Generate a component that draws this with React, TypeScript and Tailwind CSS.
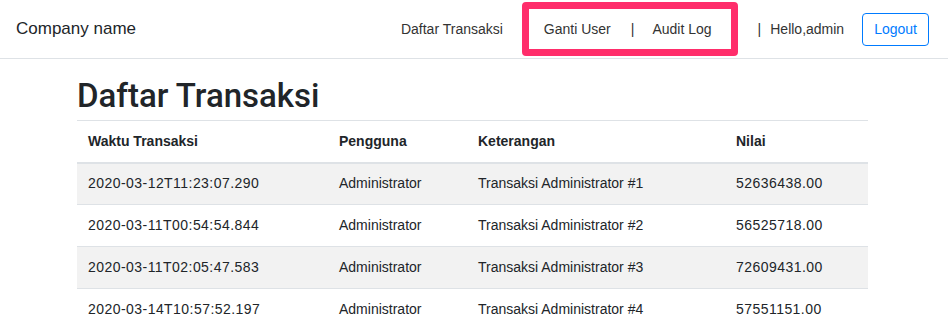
import React from "react";

const rows = [
  ["2020-03-12T11:23:07.290", "Administrator", "Transaksi Administrator #1", "52636438.00"],
  ["2020-03-11T00:54:54.844", "Administrator", "Transaksi Administrator #2", "56525718.00"],
  ["2020-03-11T02:05:47.583", "Administrator", "Transaksi Administrator #3", "72609431.00"],
  ["2020-03-14T10:57:52.197", "Administrator", "Transaksi Administrator #4", "57551151.00"],
];

export default function App() {
  return (
    <div
      className="w-[948px] h-[328px] overflow-hidden bg-white text-[#212529]"
      style={{ fontFamily: '"Liberation Sans", Arial, sans-serif' }}
    >
      <nav className="flex items-center h-[59px] border-b border-[#dee2e6] pl-4 pr-[19px]">
        <div className="text-[17px] text-[#212529]">Company name</div>
        <div className="ml-auto flex items-center text-[14px] text-[#333]">
          <span>Daftar Transaksi</span>
          <div className="ml-[19px] flex items-center h-[54px] border-[7px] border-[#ff2d6b] rounded-[4px] pl-[15px] pr-[19px]">
            <span>Ganti User</span>
            <span className="ml-[20px]">|</span>
            <span className="ml-[18px]">Audit Log</span>
          </div>
          <span className="ml-[20px]">|</span>
          <span className="ml-[9px]">Hello,admin</span>
          <button className="ml-[18px] h-[33px] px-[11px] border border-[#007bff] text-[#007bff] rounded-[4px] text-[14px]">
            Logout
          </button>
        </div>
      </nav>
      <main className="pl-[77px] pr-[80px]">
        <h2
          className="text-[33px] font-medium leading-none pt-[20px] pb-[8px] text-[#212529]"
          style={{ fontFamily: "Roboto, 'Liberation Sans', sans-serif" }}
        >
          Daftar Transaksi
        </h2>
        <table className="w-[791px] table-fixed border-collapse text-[14px]">
          <colgroup>
            <col className="w-[251px]" />
            <col className="w-[139px]" />
            <col className="w-[258px]" />
            <col className="w-[143px]" />
          </colgroup>
          <thead>
            <tr className="border-t border-[#dee2e6] border-b-2">
              {["Waktu Transaksi", "Pengguna", "Keterangan", "Nilai"].map((h) => (
                <th key={h} className="text-left font-bold px-[11px] h-[42px] leading-[21px]">
                  {h}
                </th>
              ))}
            </tr>
          </thead>
          <tbody>
            {rows.map((r, i) => (
              <tr
                key={i}
                className={`border-t border-[#dee2e6] ${i % 2 === 0 ? "bg-[#f2f2f2]" : "bg-white"}`}
              >
                {r.map((c, j) => (
                  <td
                    key={j}
                    className={`px-[11px] h-[42px] leading-[21px] ${j === 0 || j === 3 ? "tracking-[0.45px]" : ""}`}
                  >
                    {c}
                  </td>
                ))}
              </tr>
            ))}
          </tbody>
        </table>
      </main>
    </div>
  );
}
